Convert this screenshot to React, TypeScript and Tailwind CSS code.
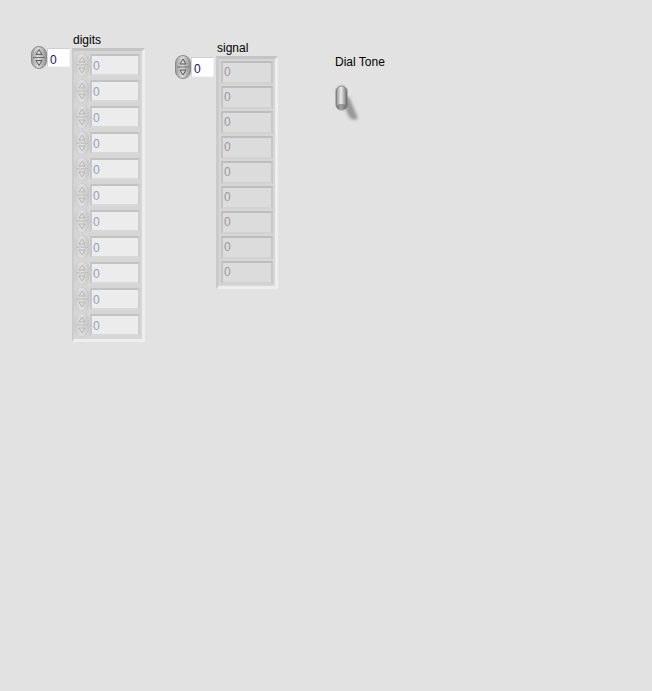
import React from "react";

const font = { fontFamily: '"Liberation Sans", Arial, sans-serif' };

function Spinner({ dim = false, h = 24 }: { dim?: boolean; h?: number }) {
  const id = dim ? "spd" : "spn";
  return (
    <svg width="16" height={h} viewBox={`0 0 16 ${h}`} className="block shrink-0">
      <defs>
        <linearGradient id={id} x1="0" x2="1" y1="0" y2="0">
          <stop offset="0" stopColor={dim ? "#c9c9c9" : "#9c9c9c"} />
          <stop offset="0.45" stopColor={dim ? "#e2e2e2" : "#dcdcdc"} />
          <stop offset="1" stopColor={dim ? "#c4c4c4" : "#8f8f8f"} />
        </linearGradient>
      </defs>
      <rect x="0.5" y="0.5" width="15" height={h - 1} rx="7.5" fill={`url(#${id})`} stroke={dim ? "#cfcfcf" : "#8a8a8a"} />
      <line x1="2" x2="14" y1={h / 2} y2={h / 2} stroke={dim ? "#b8b8b8" : "#6f6f6f"} />
      <path d={`M5 ${h / 2 - 3} L8 ${h / 2 - 8} L11 ${h / 2 - 3} Z`} fill="none" stroke={dim ? "#b4b4b4" : "#5a5a5a"} />
      <path d={`M5 ${h / 2 + 3} L8 ${h / 2 + 8} L11 ${h / 2 + 3} Z`} fill="none" stroke={dim ? "#b4b4b4" : "#5a5a5a"} />
    </svg>
  );
}

function IndexBox({ h }: { h: number }) {
  return (
    <div className="flex items-start">
      <Spinner h={h + 4} />
      <div
        className="mt-[2px] w-[23px] bg-white border border-t-[#cfcfcf] border-l-[#d6d6d6] border-r-[#f4f4f4] border-b-[#f4f4f4] pl-[2px] text-[12px] leading-[22px] text-[#14145a]"
        style={{ height: h }}
      >
        0
      </div>
    </div>
  );
}

function Toggle() {
  return (
    <svg width="28" height="38" viewBox="0 0 28 38" className="block">
      <defs>
        <linearGradient id="lever" x1="0" x2="1" y1="0" y2="0">
          <stop offset="0" stopColor="#8a8a8a" />
          <stop offset="0.45" stopColor="#ededed" />
          <stop offset="1" stopColor="#6e6e6e" />
        </linearGradient>
        <filter id="blur" x="-50%" y="-50%" width="200%" height="200%">
          <feGaussianBlur stdDeviation="1.8" />
        </filter>
      </defs>
      <path d="M6 13 L15 33 Q20 38 24 34 L15 13 Z" fill="#999999" filter="url(#blur)" />
      <ellipse cx="7.5" cy="5" rx="6" ry="4" fill="#f2f2f2" stroke="#d0d0d0" />
      <rect x="2" y="2" width="11" height="24" rx="5.5" fill="url(#lever)" stroke="#6a6a6a" strokeWidth="0.8" />
      <rect x="3" y="20" width="9" height="5" rx="3" fill="#666" opacity="0.55" />
    </svg>
  );
}

export default function App() {
  const digits = Array.from({ length: 11 });
  const signal = Array.from({ length: 9 });

  return (
    <div className="w-[652px] h-[691px] bg-[#e2e2e2] flex items-start pl-[31px] text-black" style={font}>
      {/* digits */}
      <div className="mt-[33px] flex flex-col">
        <div className="ml-[42px] h-[13px] text-[12px] leading-[14px]">digits</div>
        <div className="flex items-start gap-[2px]">
          <IndexBox h={19} />
          <div className="mt-[2px] w-[73px] bg-[#d6d6d6] border-[3px] border-l-2 border-t-[#c4c4c4] border-l-[#cbcbcb] border-r-[#eeeeee] border-b-[#eeeeee] pt-[2px] pb-[2px] flex flex-col gap-[2px]">
            {digits.map((_, i) => (
              <div key={i} className="flex items-center h-[24px]">
                <Spinner dim />
                <div className="w-[50px] h-[22px] bg-[#ececec] border-2 border-t-[#c2c2c2] border-l-[#c8c8c8] border-r-[#cfcfcf] border-b-[#d8d8d8] pl-[1px] text-[12px] leading-[21px] text-[#8ba2c2]">
                  0
                </div>
              </div>
            ))}
          </div>
        </div>
      </div>

      {/* signal */}
      <div className="ml-[30px] mt-[41px] flex flex-col">
        <div className="ml-[42px] h-[14px] text-[12px] leading-[14px]">signal</div>
        <div className="flex items-start gap-[2px]">
          <IndexBox h={20} />
          <div className="mt-[1px] w-[62px] bg-[#d6d6d6] border-[3px] border-t-[#c4c4c4] border-l-[#cbcbcb] border-r-[#eeeeee] border-b-[#eeeeee] py-[2px] pl-[2px] flex flex-col gap-[2px]">
            {signal.map((_, i) => (
              <div
                key={i}
                className="w-[52px] h-[23px] bg-[#dcdcdc] border-2 border-t-[#bdbdbd] border-l-[#c4c4c4] border-r-[#c8c8c8] border-b-[#d2d2d2] pl-[1px] text-[12px] leading-[19px] text-[#a095a6]"
              >
                0
              </div>
            ))}
          </div>
        </div>
      </div>

      {/* dial tone */}
      <div className="ml-[57px] mt-[55px] flex flex-col">
        <div className="h-[14px] text-[12px] leading-[14px] whitespace-nowrap">Dial Tone</div>
        <div className="mt-[15px] -ml-[1px]">
          <Toggle />
        </div>
      </div>
    </div>
  );
}
